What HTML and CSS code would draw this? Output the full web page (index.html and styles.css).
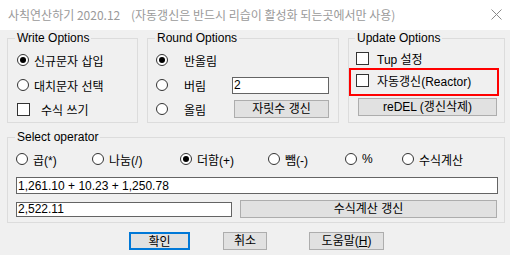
FILE: index.html
```html
<!DOCTYPE html>
<html>

<head>
	<link rel="stylesheet" href="styles.css">
</head>

<body>
	<div class="titlebar">
		<span class="title">사칙연산하기 2020.12&nbsp;&nbsp;&nbsp;&nbsp;(자동갱신은 반드시 리습이 활성화 되는곳에서만 사용)</span>
		<svg class="close" width="11" height="11" viewBox="0 0 11 11">
			<path d="M0.5 0.5 L10.5 10.5 M10.5 0.5 L0.5 10.5" stroke="#8a8a8a" stroke-width="1" fill="none" />
		</svg>
	</div>

	<div class="dialog">
		<div class="toprow">
			<fieldset class="group write">
				<legend>Write Options</legend>
				<div class="rows">
					<div class="opt"><span class="radio checked"></span><span class="lbl tight">신규문자 삽입</span></div>
					<div class="opt"><span class="radio"></span><span class="lbl tight">대치문자 선택</span></div>
					<div class="opt"><span class="check"></span><span class="lbl wide">수식 쓰기</span></div>
				</div>
			</fieldset>

			<fieldset class="group round">
				<legend>Round Options</legend>
				<div class="rows">
					<div class="opt"><span class="radio checked"></span><span class="lbl far">반올림</span></div>
					<div class="opt"><span class="radio"></span><span class="lbl far">버림</span>
						<input class="field digits" value="2" readonly />
					</div>
					<div class="opt"><span class="radio"></span><span class="lbl far">올림</span>
						<button class="btn digitsbtn">자릿수 갱신</button>
					</div>
				</div>
			</fieldset>

			<fieldset class="group update">
				<legend>Update Options</legend>
				<div class="urows">
					<div class="opt"><span class="check"></span><span class="lbl mid">Tup 설정</span></div>
					<div class="opt marked"><span class="check"></span><span class="lbl mid">자동갱신(Reactor)</span></div>
					<button class="btn redel">reDEL (갱신삭제)</button>
				</div>
			</fieldset>
		</div>

		<fieldset class="group operator">
			<legend>Select operator</legend>
			<div class="ops">
				<div class="opt op1"><span class="radio"></span><span class="lbl tight">곱(*)</span></div>
				<div class="opt op2"><span class="radio"></span><span class="lbl tight">나눔(/)</span></div>
				<div class="opt op3"><span class="radio checked"></span><span class="lbl tight">더함(+)</span></div>
				<div class="opt op4"><span class="radio"></span><span class="lbl tight">뺌(-)</span></div>
				<div class="opt op5"><span class="radio"></span><span class="lbl tight">%</span></div>
				<div class="opt"><span class="radio"></span><span class="lbl tight">수식계산</span></div>
			</div>
			<input class="field formula" value="1,261.10 + 10.23 + 1,250.78" readonly />
			<div class="resultrow">
				<input class="field result" value="2,522.11" readonly />
				<button class="btn calc">수식계산 갱신</button>
			</div>
		</fieldset>

		<div class="actions">
			<button class="btn ok">확인</button>
			<button class="btn cancel">취소</button>
			<button class="btn help">도움말(<u>H</u>)</button>
		</div>
	</div>
</body>

</html>
```

FILE: styles.css
```css
* {
	box-sizing: border-box;
}

body {
	margin: 0;
	width: 510px;
	height: 255px;
	overflow: hidden;
	background-color: #f0f0f0;
	font-family: "Liberation Sans", "Noto Sans CJK KR", sans-serif;
	font-size: 12px;
	color: #000;
}

.titlebar {
	height: 30px;
	background-color: #fff;
	display: flex;
	align-items: center;
	justify-content: space-between;
	padding: 0 8px 1px 8px;
}

.title {
	font-family: "Noto Sans CJK KR", sans-serif;
	font-size: 12px;
	color: #9a9a9a;
}

.close {
	margin-right: 0;
}

.dialog {
	padding: 1px 5px 0 7px;
}

.toprow {
	display: flex;
	gap: 9px;
}

.group {
	margin: 0;
	padding: 0 9px 2px 8px;
	border: 1px solid #dcdcdc;
	min-width: 0;
}

.group legend {
	padding: 0 2px;
	margin-left: -1px;
	line-height: 14px;
	font-size: 12px;
}

.write {
	width: 131px;
}

.round {
	width: 192px;
}

.update {
	width: 157px;
	padding: 0 7px 2px 7px;
}

.rows {
	display: grid;
	grid-template-rows: 24px 26px 22px;
	padding-top: 3px;
}

.urows {
	display: grid;
	grid-template-rows: 20px 24px;
	padding-top: 3px;
}

.opt {
	display: flex;
	align-items: center;
	white-space: nowrap;
}

.radio {
	width: 12px;
	height: 12px;
	border: 1px solid #333;
	border-radius: 50%;
	background-color: #fff;
	display: flex;
	align-items: center;
	justify-content: center;
	flex-shrink: 0;
}

.radio.checked::after {
	content: "";
	width: 6px;
	height: 6px;
	border-radius: 50%;
	background-color: #000;
}

.check {
	width: 13px;
	height: 13px;
	border: 1px solid #333;
	background-color: #fff;
	flex-shrink: 0;
}

.lbl.tight {
	margin-left: 5px;
}

.lbl.wide {
	margin-left: 11px;
}

.lbl.far {
	margin-left: 16px;
}

.lbl.mid {
	margin-left: 8px;
}

.write .opt {
	padding-left: 1px;
}

.field {
	font-family: "Liberation Sans", "Noto Sans CJK KR", sans-serif;
	font-size: 12px;
	border: 1px solid #646464;
	background-color: #fff;
	padding: 0 1px;
	margin: 0;
	outline: none;
	color: #000;
}

.digits {
	margin-left: auto;
	width: 97px;
	height: 17px;
}

.btn {
	font-family: "Liberation Sans", "Noto Sans CJK KR", sans-serif;
	font-size: 12px;
	background-color: #e1e1e1;
	border: 1px solid #adadad;
	color: #000;
	padding: 0;
	margin: 0;
	height: 18px;
	line-height: 16px;
}

.digitsbtn {
	margin-left: auto;
	width: 95px;
}

.marked {
	position: relative;
}

.marked::before {
	content: "";
	position: absolute;
	left: -7px;
	top: 0;
	width: 146px;
	height: 24px;
	border: 2px solid #ff0000;
}

.redel {
	margin-top: 6px;
	margin-left: 2px;
	width: 139px;
}

.operator {
	margin-top: 7px;
	width: 498px;
	padding: 0 6px 4px 8px;
}

.ops {
	display: flex;
	height: 20px;
	margin-top: 5px;
}

.op1 {
	width: 76px;
}

.op2 {
	width: 88px;
}

.op3 {
	width: 88px;
}

.op4 {
	width: 77px;
}

.op5 {
	width: 57px;
}

.formula {
	display: block;
	width: 482px;
	height: 17px;
	margin-top: 8px;
}

.resultrow {
	display: flex;
	align-items: center;
	margin-top: 6px;
}

.result {
	width: 216px;
	height: 15px;
}

.calc {
	margin-left: 8px;
	width: 257px;
}

.actions {
	display: flex;
	margin-top: 9px;
	padding-left: 122px;
}

.ok {
	width: 61px;
	border: 2px solid #0078d7;
}

.cancel {
	width: 44px;
	margin-left: 33px;
}

.help {
	width: 75px;
	margin-left: 42px;
}
```
